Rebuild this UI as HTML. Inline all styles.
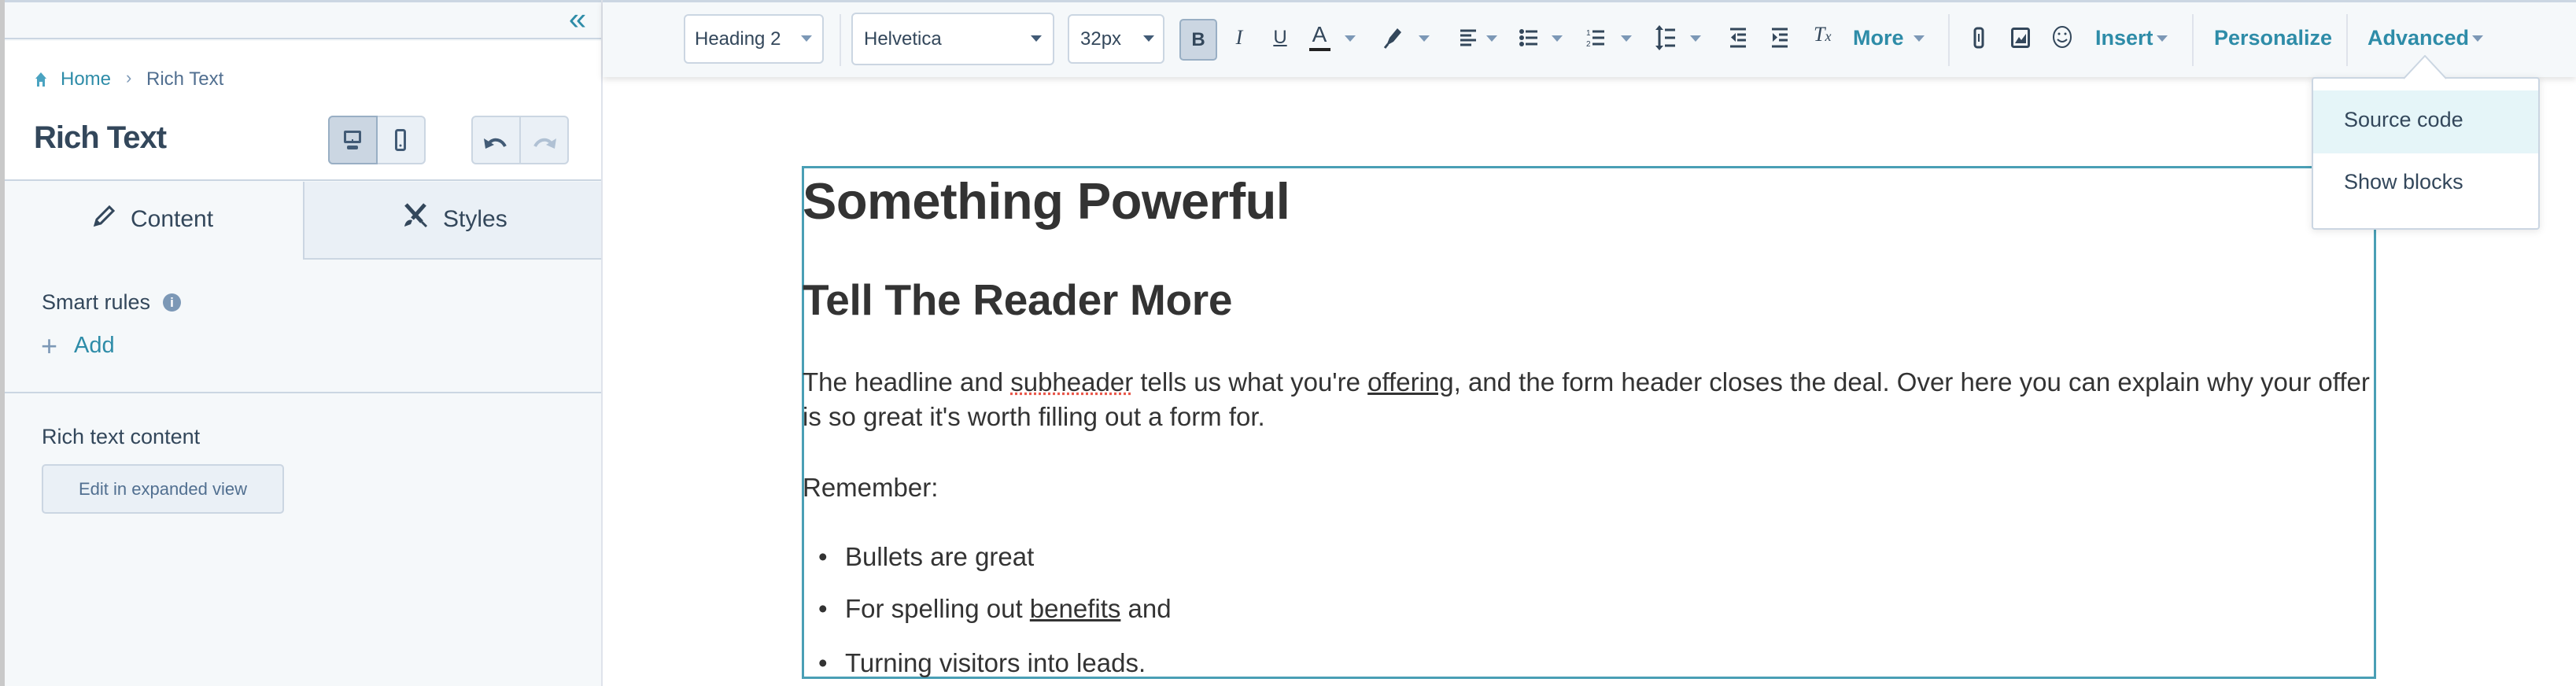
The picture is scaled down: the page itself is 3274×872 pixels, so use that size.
<!DOCTYPE html>
<html><head><meta charset="utf-8">
<style>
*{margin:0;padding:0;box-sizing:border-box}
body{width:3274px;height:872px;overflow:hidden;background:#fff;font-family:"Liberation Sans",sans-serif;position:relative}
.a{position:absolute}
.c{position:absolute;transform:translate(-50%,-50%)}
.teal{color:#0091ae}
.tl{color:#2e8ca8;font-size:27px;font-weight:bold}
.caret{position:absolute;width:0;height:0;border-left:7px solid transparent;border-right:7px solid transparent;border-top:8px solid #7c98b6}
.sel{position:absolute;background:#fff;border:2px solid #cbd6e2;border-radius:6px;color:#33475b;font-size:24px}
.sep{position:absolute;width:2px;background:#dfe3eb;top:18px;height:66px}
.bt{font-size:33px;color:#333;line-height:44px}
</style></head><body>
<div class="a" style="left:0;top:0;width:6px;height:872px;background:#c9c9c9"></div>
<div class="a" style="left:6px;top:0;width:760px;height:872px;background:#f5f8fa;border-right:2px solid #dfe3eb"></div>
<div class="a" style="left:6px;top:0;width:758px;height:50px;background:#f5f8fa;border-top:3px solid #cbd6e2;border-bottom:2px solid #cbd6e2"></div>
<div class="c teal" style="left:730px;top:25px;font-size:40px;color:#2e8ca8;letter-spacing:-8px">«</div>
<div class="a" style="left:6px;top:52px;width:758px;height:178px;background:#fff;border-bottom:2px solid #cbd6e2"></div>
<svg class="a" style="left:44px;top:91px" width="16" height="20" viewBox="0 0 16 20"><path d="M8 1 L15 9 H13 V19 H10 V13 H6 V19 H3 V9 H1 Z" fill="#4aa3c1"/></svg>
<div class="a" style="left:77px;top:87px;font-size:24px;color:#2e8ca8">Home</div>
<div class="a" style="left:160px;top:86px;font-size:22px;color:#7c98b6">›</div>
<div class="a" style="left:186px;top:87px;font-size:24px;color:#516f90">Rich Text</div>
<div class="a" style="left:43px;top:153px;font-size:40px;font-weight:bold;color:#33475b;letter-spacing:-1px">Rich Text</div>
<div class="a" style="left:417px;top:147px;width:124px;height:62px;border:2px solid #cbd6e2;border-radius:6px;background:#eaf0f6;overflow:hidden">
 <div class="a" style="left:0;top:0;width:61px;height:60px;background:#cbd6e2;border-right:2px solid #99afc4"></div>
</div>
<div class="a" style="left:417px;top:147px;width:63px;height:62px;border:2px solid #99afc4;border-radius:6px 0 0 6px"></div>
<svg class="a" style="left:436px;top:165px" width="24" height="26" viewBox="0 0 24 26"><rect x="1" y="1" width="22" height="16" rx="2" fill="#425b76"/><rect x="4" y="4" width="16" height="10" fill="#cbd6e2"/><rect x="11" y="12" width="2" height="4" fill="#425b76"/><rect x="5" y="20" width="14" height="5" rx="2" fill="#425b76"/></svg>
<svg class="a" style="left:502px;top:164px" width="14" height="28" viewBox="0 0 14 28"><rect x="1.5" y="1.5" width="11" height="25" rx="2" fill="none" stroke="#425b76" stroke-width="3"/><circle cx="7" cy="21" r="1.5" fill="#425b76"/></svg>
<div class="a" style="left:599px;top:147px;width:124px;height:62px;border:2px solid #cbd6e2;border-radius:6px;background:#eaf0f6"></div>
<div class="a" style="left:660px;top:149px;width:2px;height:58px;background:#cbd6e2"></div>
<svg class="a" style="left:614px;top:170px" width="32" height="22" viewBox="0 0 32 22"><path d="M6 16 C8 6 22 4 28 16" fill="none" stroke="#425b76" stroke-width="4"/><path d="M1 6 L3 19 L14 14 Z" fill="#425b76"/></svg>
<svg class="a" style="left:676px;top:170px" width="32" height="22" viewBox="0 0 32 22"><path d="M26 16 C24 6 10 4 4 16" fill="none" stroke="#b0c1d4" stroke-width="4"/><path d="M31 6 L29 19 L18 14 Z" fill="#b0c1d4"/></svg>
<div class="a" style="left:6px;top:231px;width:379px;height:98px;background:#f5f8fa"></div>
<div class="a" style="left:385px;top:231px;width:379px;height:99px;background:#eaf0f6;border-left:2px solid #cbd6e2;border-bottom:2px solid #cbd6e2"></div>
<svg class="a" style="left:117px;top:260px" width="30" height="30" viewBox="0 0 30 30"><path d="M4 26 L6 19 L22 3 L27 8 L11 24 Z" fill="none" stroke="#33475b" stroke-width="3"/><path d="M4 26 L6 19 L11 24Z" fill="#33475b"/></svg>
<div class="a" style="left:166px;top:262px;font-size:30px;color:#33475b">Content</div>
<svg class="a" style="left:512px;top:258px" width="32" height="32" viewBox="0 0 32 32"><path d="M4 2 L24 24 M28 2 L12 20" stroke="#33475b" stroke-width="5"/><path d="M2 30 C3 24 7 20 12 22 L10 27 Z" fill="#33475b"/><path d="M24 24 L30 30" stroke="#33475b" stroke-width="3"/></svg>
<div class="a" style="left:563px;top:262px;font-size:30px;color:#33475b">Styles</div>
<div class="a" style="left:53px;top:369px;font-size:27px;color:#33475b">Smart rules</div>
<div class="a" style="left:207px;top:373px;width:23px;height:23px;border-radius:50%;background:#7c98b6;color:#fff;font-size:17px;font-weight:bold;text-align:center;line-height:23px">i</div>
<div class="a" style="left:52px;top:420px;font-size:36px;color:#7c98b6;line-height:40px">+</div>
<div class="a" style="left:94px;top:423px;font-size:29px;color:#2e8ca8">Add</div>
<div class="a" style="left:6px;top:498px;width:758px;height:2px;background:#cbd6e2"></div>
<div class="a" style="left:53px;top:540px;font-size:27px;color:#33475b">Rich text content</div>
<div class="a" style="left:53px;top:590px;width:308px;height:63px;background:#eaf0f6;border:2px solid #cbd6e2;border-radius:5px;color:#516f90;font-size:22px;text-align:center;line-height:59px">Edit in expanded view</div>

<div class="a" style="left:766px;top:0;width:2508px;height:98px;background:#f5f8fa;border-top:3px solid #cbd6e2;box-shadow:0 3px 8px rgba(0,0,0,0.12)"></div>
<div class="sel" style="left:869px;top:18px;width:178px;height:63px;line-height:59px;padding-left:12px">Heading 2</div>
<div class="caret" style="left:1018px;top:45px"></div>
<div class="sep" style="left:1067px"></div>
<div class="sel" style="left:1082px;top:16px;width:258px;height:67px;line-height:63px;padding-left:14px">Helvetica</div>
<div class="caret" style="left:1310px;top:45px;border-top-color:#425b76"></div>
<div class="sel" style="left:1357px;top:18px;width:123px;height:63px;line-height:59px;padding-left:14px">32px</div>
<div class="caret" style="left:1453px;top:45px;border-top-color:#425b76"></div>
<div class="a" style="left:1499px;top:24px;width:48px;height:53px;background:#cbd6e2;border:2px solid #99afc4;border-radius:5px;text-align:center;line-height:49px;font-weight:bold;font-size:24px;color:#33475b">B</div>
<div class="c" style="left:1575px;top:48px;font-size:26px;font-style:italic;font-family:'Liberation Serif',serif;color:#33475b">I</div>
<div class="c" style="left:1627px;top:48px;font-size:24px;text-decoration:underline;color:#33475b">U</div>
<div class="c" style="left:1677px;top:44px;font-size:28px;color:#33475b">A</div>
<div class="a" style="left:1664px;top:61px;width:27px;height:4px;background:#222"></div>
<div class="caret" style="left:1709px;top:45px"></div>
<svg class="a" style="left:1758px;top:32px" width="26" height="30" viewBox="0 0 26 30"><path d="M4 26 L8 16 L18 4 L23 9 L13 21 Z" fill="#33475b"/><path d="M2 29 L6 24" stroke="#33475b" stroke-width="3"/></svg>
<div class="caret" style="left:1803px;top:45px"></div>
<svg class="a" style="left:1855px;top:36px" width="22" height="24" viewBox="0 0 22 24"><path d="M1 3H21M1 9H15M1 15H21M1 21H15" stroke="#33475b" stroke-width="3"/></svg>
<div class="caret" style="left:1889px;top:45px"></div>
<svg class="a" style="left:1931px;top:36px" width="24" height="24" viewBox="0 0 24 24"><circle cx="3" cy="4" r="3" fill="#33475b"/><circle cx="3" cy="12" r="3" fill="#33475b"/><circle cx="3" cy="20" r="3" fill="#33475b"/><path d="M8 4H23M8 12H23M8 20H23" stroke="#33475b" stroke-width="3"/></svg>
<div class="caret" style="left:1972px;top:45px"></div>
<svg class="a" style="left:2016px;top:35px" width="24" height="26" viewBox="0 0 24 26"><text x="0" y="10" font-size="10" fill="#33475b" font-family="Liberation Sans">1</text><text x="0" y="24" font-size="10" fill="#33475b" font-family="Liberation Sans">2</text><path d="M8 5H23M8 13H23M8 21H23" stroke="#33475b" stroke-width="3"/></svg>
<div class="caret" style="left:2060px;top:45px"></div>
<svg class="a" style="left:2104px;top:30px" width="26" height="36" viewBox="0 0 26 36"><path d="M5 4V32" stroke="#33475b" stroke-width="3"/><path d="M0 8L5 2L10 8ZM0 28L5 34L10 28Z" fill="#33475b"/><path d="M12 8H25M12 18H25M12 28H25" stroke="#33475b" stroke-width="3"/></svg>
<div class="caret" style="left:2148px;top:45px"></div>
<svg class="a" style="left:2198px;top:35px" width="22" height="26" viewBox="0 0 22 26"><path d="M1 2H21M10 9H21M10 16H21M1 24H21" stroke="#33475b" stroke-width="3"/><path d="M8 7L2 12.5L8 18Z" fill="#33475b"/></svg>
<svg class="a" style="left:2251px;top:35px" width="22" height="26" viewBox="0 0 22 26"><path d="M1 2H21M10 9H21M10 16H21M1 24H21" stroke="#33475b" stroke-width="3"/><path d="M2 7L8 12.5L2 18Z" fill="#33475b"/></svg>
<div class="a" style="left:2305px;top:29px;font-size:26px;font-style:italic;color:#33475b;font-family:'Liberation Serif',serif">T<span style="font-size:18px">x</span></div>
<div class="a tl" style="left:2355px;top:33px">More</div>
<div class="caret" style="left:2432px;top:45px"></div>
<div class="sep" style="left:2476px"></div>
<svg class="a" style="left:2508px;top:34px" width="14" height="28" viewBox="0 0 14 28"><rect x="2" y="2" width="10" height="24" rx="3" fill="none" stroke="#33475b" stroke-width="3"/><path d="M7 9V19" stroke="#33475b" stroke-width="2"/></svg>
<svg class="a" style="left:2556px;top:35px" width="24" height="26" viewBox="0 0 24 26"><rect x="1.5" y="1.5" width="21" height="23" rx="2" fill="none" stroke="#33475b" stroke-width="3"/><path d="M5 20L10 12L13 16L19 8V20Z" fill="#33475b"/></svg>
<svg class="a" style="left:2608px;top:32px" width="26" height="30" viewBox="0 0 26 30"><ellipse cx="13" cy="15" rx="11" ry="13" fill="none" stroke="#33475b" stroke-width="2"/><circle cx="9" cy="11" r="1.5" fill="#33475b"/><circle cx="17" cy="11" r="1.5" fill="#33475b"/><path d="M7 18Q13 24 19 18" fill="none" stroke="#33475b" stroke-width="2"/></svg>
<div class="a tl" style="left:2663px;top:33px">Insert</div>
<div class="caret" style="left:2741px;top:45px"></div>
<div class="sep" style="left:2786px"></div>
<div class="a tl" style="left:2814px;top:33px">Personalize</div>
<div class="sep" style="left:2982px"></div>
<div class="a tl" style="left:3009px;top:33px">Advanced</div>
<div class="caret" style="left:3142px;top:45px"></div>

<div class="a" style="left:1019px;top:211px;width:2001px;height:652px;border:3px solid #4a9fb5"></div>
<div class="a" style="left:1020px;top:218px;font-size:65px;font-weight:bold;color:#333;letter-spacing:-0.5px;line-height:76px">Something Powerful</div>
<div class="a" style="left:1020px;top:349px;font-size:55px;font-weight:bold;color:#333;letter-spacing:-0.3px;line-height:64px">Tell The Reader More</div>
<div class="a bt" style="left:1020px;top:464px;white-space:nowrap">The headline and <span style="text-decoration:underline dotted #e8574a">subheader</span> tells us what you're <u>offering</u>, and the form header closes the deal. Over here you can explain why your offer<br>is so great it's worth filling out a form for.</div>
<div class="a bt" style="left:1020px;top:598px">Remember:</div>
<div class="a bt" style="left:1040px;top:686px">•<span style="position:absolute;left:34px;white-space:nowrap">Bullets are great</span></div>
<div class="a bt" style="left:1040px;top:752px">•<span style="position:absolute;left:34px;white-space:nowrap">For spelling out <u>benefits</u> and</span></div>
<div class="a bt" style="left:1040px;top:821px">•<span style="position:absolute;left:34px;white-space:nowrap">Turning visitors into leads.</span></div>

<div class="a" style="left:2938px;top:98px;width:290px;height:194px;background:#fff;border:2px solid #cbd6e2;border-radius:4px;box-shadow:0 2px 10px rgba(0,0,0,0.1)"></div>
<svg class="a" style="left:3055px;top:70px" width="54" height="31" viewBox="0 0 54 31"><path d="M0 30 L27 1 L54 30" fill="#fff" stroke="#cbd6e2" stroke-width="2"/><rect x="2" y="29" width="50" height="3" fill="#fff"/></svg>
<div class="a" style="left:2940px;top:115px;width:286px;height:80px;background:#e5f5f8"></div>
<div class="a" style="left:2979px;top:137px;font-size:27px;color:#33475b">Source code</div>
<div class="a" style="left:2979px;top:216px;font-size:27px;color:#33475b">Show blocks</div>
</body></html>
